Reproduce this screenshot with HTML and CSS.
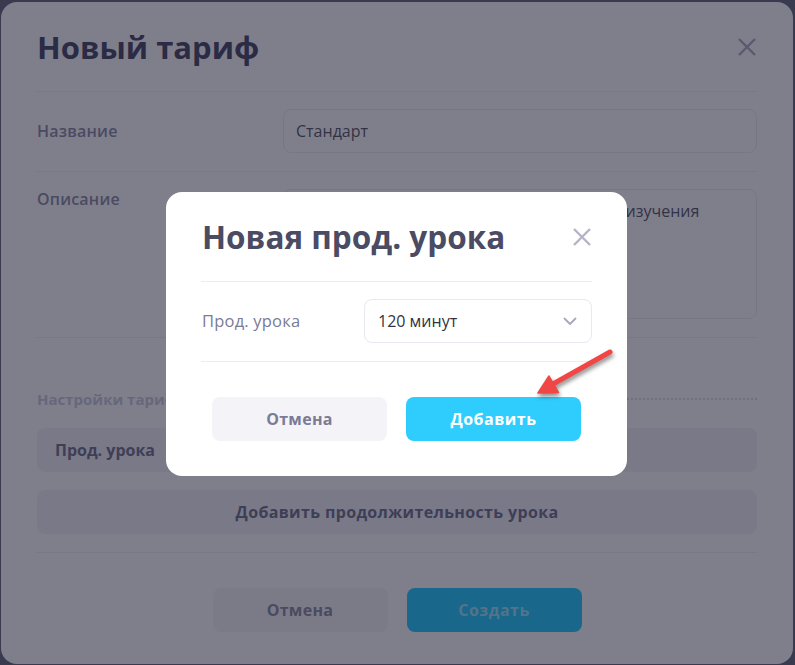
FILE: index.html
```html
<!DOCTYPE html>
<html lang="ru">
<head>
<meta charset="utf-8">
<title>Новый тариф</title>
<link rel="stylesheet" href="styles.css">
</head>
<body>
<div class="card">
  <div class="header">
    <h1 class="title">Новый тариф</h1>
    <svg class="close" width="20" height="20" viewBox="0 0 20 20"><path d="M2 2L18 18M18 2L2 18"/></svg>
  </div>
  <div class="row">
    <div class="label">Название</div>
    <div class="input">Стандарт</div>
  </div>
  <div class="row row-top">
    <div class="label">Описание</div>
    <div class="input textarea">Стандартный план для самостоятельного изучения</div>
  </div>
  <div class="section">
    <div class="section-title">Настройки тарифа</div>
    <div class="dots"></div>
  </div>
  <div class="item">Прод. урока</div>
  <div class="add-btn">Добавить продолжительность урока</div>
  <div class="footer">
    <div class="btn btn-cancel">Отмена</div>
    <div class="btn btn-primary btn-dim">Создать</div>
  </div>
</div>

<div class="overlay">
  <div class="popup">
    <div class="header">
      <h2 class="title">Новая прод. урока</h2>
      <svg class="close close-light" width="20" height="20" viewBox="0 0 20 20"><path d="M2 2L18 18M18 2L2 18"/></svg>
    </div>
    <div class="row popup-row">
      <div class="label label-light">Прод. урока</div>
      <div class="input select">
        <span>120 минут</span>
        <svg class="chev" width="14" height="9" viewBox="0 0 14 9"><path d="M1.5 1.5L7 7L12.5 1.5"/></svg>
      </div>
    </div>
    <div class="footer popup-footer">
      <div class="btn btn-cancel">Отмена</div>
      <div class="btn btn-primary">Добавить</div>
    </div>
  </div>
  <svg class="arrow" width="100" height="75" viewBox="0 0 100 75">
    <path class="shaft" d="M90 22L33 54"/>
    <path class="head" d="M18 63L38.5 62.5L29 46Z"/>
  </svg>
</div>
</body>
</html>
```

FILE: styles.css
```css
* { box-sizing: border-box; }
html, body { margin: 0; padding: 0; }
body {
  width: 795px;
  height: 665px;
  overflow: hidden;
  background: #52526b;
  font-family: "Open Sans", "Noto Sans", sans-serif;
  padding: 2px 2px 1px 1px;
}
.card {
  height: 662px;
  background: #ffffff;
  border-radius: 16px;
  padding: 0 36px;
  display: flex;
  flex-direction: column;
}
.header {
  height: 90px;
  display: flex;
  align-items: center;
  justify-content: space-between;
  border-bottom: 1px solid #ececf3;
}
.title {
  margin: 0;
  font-size: 31px;
  font-weight: 700;
  color: #2f2f50;
}
.close { display: block; }
.close path {
  stroke: #a0a0bc;
  stroke-width: 2.4;
  fill: none;
}
.close-light path { stroke: #b4b4c8; }
.row {
  display: flex;
  align-items: center;
  padding: 17px 0 18px;
  border-bottom: 1px solid #ececf3;
}
.row-top { align-items: flex-start; }
.label {
  width: 246px;
  flex: none;
  font-size: 16px;
  font-weight: 600;
  color: #7b7b99;
  line-height: 20px;
  letter-spacing: 0.2px;
}
.input {
  flex: 1;
  height: 44px;
  border: 1px solid #e8e8f0;
  border-radius: 8px;
  padding: 0 12px;
  display: flex;
  align-items: center;
  font-size: 16px;
  color: #404052;
}
.textarea {
  height: 130px;
  align-items: flex-start;
  padding: 9px 12px;
  line-height: 24px;
}
.section {
  display: flex;
  align-items: center;
  margin-top: 50px;
  height: 22px;
}
.section-title {
  font-size: 15px;
  font-weight: 700;
  color: #c3c3d8;
  white-space: nowrap;
}
.dots {
  flex: 1;
  margin-left: 10px;
  border-bottom: 2px dotted #d6d6e0;
}
.item {
  margin-top: 18px;
  height: 44px;
  border-radius: 8px;
  background: #f1f1f6;
  padding: 0 18px;
  display: flex;
  align-items: center;
  font-size: 16px;
  font-weight: 700;
  color: #5c5c7c;
}
.add-btn {
  margin-top: 18px;
  height: 44px;
  border-radius: 8px;
  background: #f1f1f6;
  display: flex;
  align-items: center;
  justify-content: center;
  font-size: 16px;
  font-weight: 700;
  letter-spacing: 0.35px;
  color: #5c5c7c;
}
.footer {
  margin-top: 18px;
  border-top: 1px solid #ececf3;
  padding-top: 35px;
  display: flex;
  justify-content: center;
  gap: 19px;
}
.btn {
  width: 175px;
  height: 44px;
  border-radius: 8px;
  display: flex;
  align-items: center;
  justify-content: center;
  font-size: 16px;
  font-weight: 700;
  letter-spacing: 0.3px;
}
.btn-cancel {
  background: #f4f4f8;
  color: #7b7b95;
}
.btn-primary {
  background: #2fcdfd;
  color: #ffffff;
  letter-spacing: 0.5px;
}
.btn-dim {
  background: #00c4ff;
  color: rgba(255, 255, 255, 0.55);
}
.overlay {
  position: fixed;
  inset: 0;
  background: rgba(42, 42, 62, 0.6);
  display: flex;
  align-items: center;
  justify-content: center;
  padding: 3px 2px 0 0;
}
.popup {
  width: 461px;
  height: 284px;
  background: #ffffff;
  border-radius: 16px;
  padding: 0 35px;
  display: flex;
  flex-direction: column;
}
.popup .title {
  color: #4b4b63;
  font-size: 31.5px;
  padding-left: 1px;
}
.popup-row .label {
  width: 163px;
  padding-left: 1px;
}
.label-light {
  font-weight: 500;
  font-size: 16.5px;
  color: #7b7b95;
}
.select {
  justify-content: space-between;
  padding: 0 14px 0 13px;
  color: #33333f;
}
.chev path {
  fill: none;
  stroke: #a8a8bc;
  stroke-width: 1.8;
  stroke-linecap: round;
  stroke-linejoin: round;
}
.popup-footer {
  margin-top: 0;
  border-top: none;
}
.arrow {
  position: absolute;
  left: 520px;
  top: 330px;
  filter: drop-shadow(1px 3px 2px rgba(0, 0, 0, 0.45));
}
.shaft {
  stroke: #f04646;
  stroke-width: 5;
  stroke-linecap: round;
  fill: none;
}
.head {
  fill: #f04646;
  stroke: #f04646;
  stroke-width: 1.5;
  stroke-linejoin: round;
}
```
